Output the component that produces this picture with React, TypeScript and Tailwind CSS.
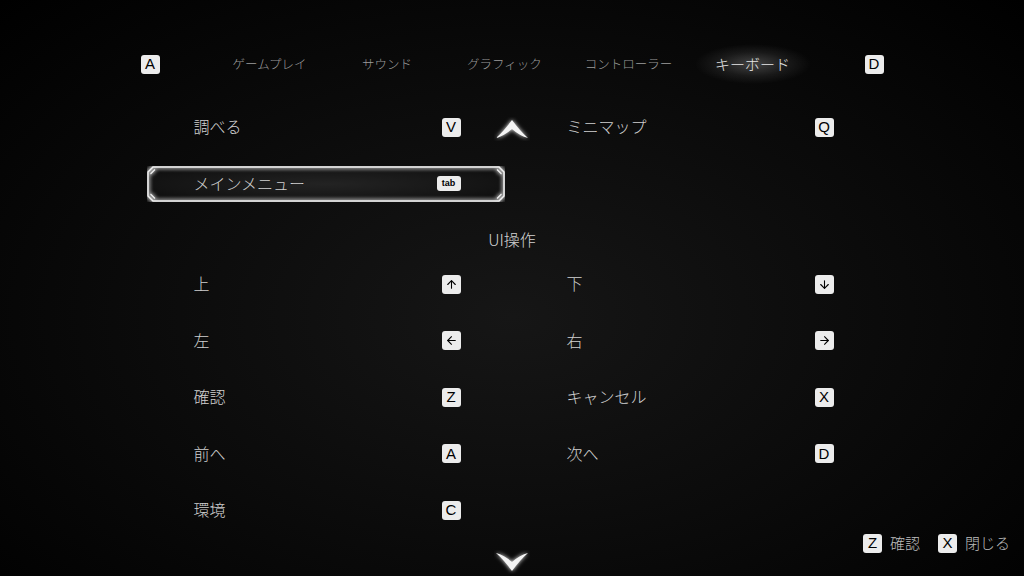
import { ArrowUp, ArrowDown, ArrowLeft, ArrowRight } from 'lucide-react';
import type { ReactNode } from 'react';

const jp = "font-['Noto_Sans_CJK_JP','Noto_Sans',sans-serif] font-light";

function Key({ children, small = false }: { children: ReactNode; small?: boolean }) {
  return (
    <span
      className={`flex items-center justify-center rounded-[3px] bg-[#ececec] text-black font-['Liberation_Sans',sans-serif] ${
        small ? 'h-[15px] w-[24px] text-[9px] font-bold' : 'h-[19px] w-[19px] text-[15px]'
      }`}
    >
      {children}
    </span>
  );
}

function Frame() {
  return (
    <svg className="absolute inset-0" width="358" height="36" viewBox="0 0 358 36" fill="none">
      <defs>
        <filter id="glow" x="-10%" y="-50%" width="120%" height="200%">
          <feGaussianBlur stdDeviation="2.2" result="b" />
          <feMerge>
            <feMergeNode in="b" />
            <feMergeNode in="b" />
            <feMergeNode in="SourceGraphic" />
          </feMerge>
        </filter>
      </defs>
      <g filter="url(#glow)" stroke="#f2f2f2" strokeWidth="1.5">
        <path d="M6 1 H352 L357 6 V30 L352 35 H6 L1 30 V6 Z" />
        <path d="M3.5 8 L8 3.5 M3.5 28 L8 32.5 M354.5 8 L350 3.5 M354.5 28 L350 32.5" strokeWidth="1.1" />
      </g>
    </svg>
  );
}

type Cell = { label: string; key?: ReactNode; small?: boolean; selected?: boolean } | null;

function Row({ left, right }: { left: Cell; right: Cell }) {
  return (
    <div className="grid h-[56.5px] grid-cols-2 gap-[15px]">
      {[left, right].map((c, i) => (
        <div key={i} className="flex items-center">
          {c && (
            <div
              className={`relative flex h-[36px] w-full items-center justify-between pl-[47px] pr-[44px] ${
                c.selected
                  ? 'rounded-[4px] bg-[radial-gradient(ellipse_at_center,#232323_0%,#141414_65%,#0a0a0a_100%)]'
                  : ''
              }`}
            >
              {c.selected && <Frame />}
              <span className={`${jp} relative -mt-[2px] text-[16px] text-[#d0d0d0]`}>{c.label}</span>
              <span className="relative">
                <Key small={c.small}>{c.key}</Key>
              </span>
            </div>
          )}
        </div>
      ))}
    </div>
  );
}

const tabs = [
  { name: 'ゲームプレイ', w: 'w-[116px]' },
  { name: 'サウンド', w: 'w-[119px]' },
  { name: 'グラフィック', w: 'w-[116px]' },
  { name: 'コントローラー', w: 'w-[132px]' },
  { name: 'キーボード', w: 'w-[116px]', active: true },
];

const ai = { size: 13, strokeWidth: 2, color: '#000' };

export default function App() {
  return (
    <div className="relative h-[576px] w-full overflow-hidden bg-[radial-gradient(ellipse_at_50%_55%,#161616_0%,#0a0a0a_55%,#000_100%)]">
      <div className="flex flex-col pt-[44px]">
        {/* tabs */}
        <div className="flex h-10 items-center justify-center">
          <Key>A</Key>
          <div className="ml-[52px] flex">
            {tabs.map((t) => (
              <div
                key={t.name}
                className={`${t.w} flex h-10 items-center justify-center ${jp} ${
                  t.active
                    ? 'bg-[radial-gradient(closest-side,rgba(255,255,255,0.24),rgba(255,255,255,0.07)_60%,transparent)] text-[15px] text-[#e6e6e6]'
                    : 'text-[12.5px] text-[#9c9c9c]'
                }`}
              >
                {t.name}
              </div>
            ))}
          </div>
          <div className="ml-[54px]">
            <Key>D</Key>
          </div>
        </div>

        {/* bindings */}
        <div className="mx-auto mt-[15px] w-[731px]">
          <Row left={{ label: '調べる', key: 'V' }} right={{ label: 'ミニマップ', key: 'Q' }} />
          <Row left={{ label: 'メインメニュー', key: 'tab', small: true, selected: true }} right={null} />
          <div className={`flex h-[44px] items-start justify-center pt-[16px] ${jp} text-[16px] leading-[22px] text-[#d2d2d2]`}>
            UI操作
          </div>
          <Row left={{ label: '上', key: <ArrowUp {...ai} /> }} right={{ label: '下', key: <ArrowDown {...ai} /> }} />
          <Row left={{ label: '左', key: <ArrowLeft {...ai} /> }} right={{ label: '右', key: <ArrowRight {...ai} /> }} />
          <Row left={{ label: '確認', key: 'Z' }} right={{ label: 'キャンセル', key: 'X' }} />
          <Row left={{ label: '前へ', key: 'A' }} right={{ label: '次へ', key: 'D' }} />
          <Row left={{ label: '環境', key: 'C' }} right={null} />
        </div>
      </div>

      {/* scroll indicators */}
      <svg className="absolute left-[494px] top-[117px]" width="36" height="24" viewBox="0 0 36 24">
        <defs>
          <filter id="cg" x="-50%" y="-50%" width="200%" height="200%">
            <feGaussianBlur stdDeviation="2" result="b" />
            <feMerge>
              <feMergeNode in="b" />
              <feMergeNode in="SourceGraphic" />
            </feMerge>
          </filter>
        </defs>
        <path d="M2 21 Q10 14 18 3 Q26 14 34 21 Q26 19 18 12 Q10 19 2 21 Z" fill="#f4f4f4" filter="url(#cg)" />
      </svg>
      <svg className="absolute left-[494px] top-[550px]" width="36" height="24" viewBox="0 0 36 24">
        <path d="M2 3 Q10 5 18 12 Q26 5 34 3 Q26 10 18 21 Q10 10 2 3 Z" fill="#f4f4f4" filter="url(#cg)" />
      </svg>

      {/* footer hints */}
      <div className={`absolute right-[14px] top-[532px] flex items-center ${jp} text-[15px] text-[#bdbdbd]`}>
        <Key>Z</Key>
        <span className="ml-[8px]">確認</span>
        <span className="ml-[18px]">
          <Key>X</Key>
        </span>
        <span className="ml-[8px]">閉じる</span>
      </div>
    </div>
  );
}
